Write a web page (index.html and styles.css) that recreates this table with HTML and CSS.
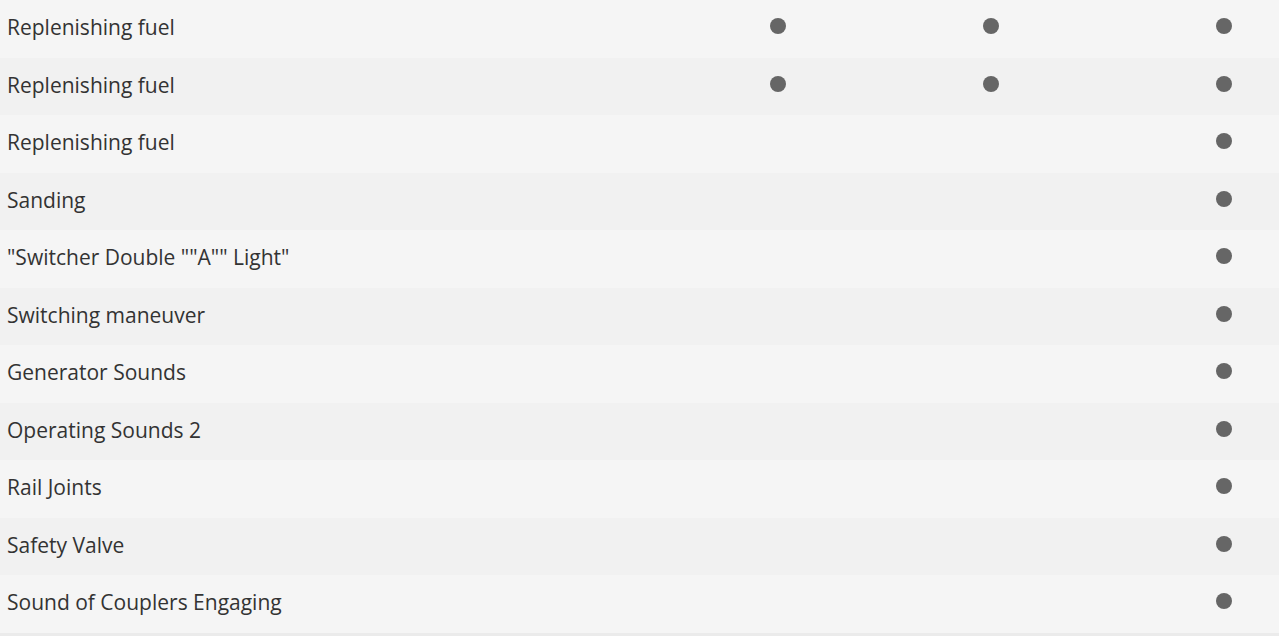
FILE: index.html
```html
<!DOCTYPE html>
<html>
<head>
<meta charset="utf-8">
<link rel="stylesheet" href="styles.css">
</head>
<body>
<div class="table">
  <div class="row"><div class="label">Replenishing fuel</div><div class="cell"><span class="dot"></span></div><div class="cell"><span class="dot"></span></div><div class="cell"><span class="dot"></span></div></div>
  <div class="row"><div class="label">Replenishing fuel</div><div class="cell"><span class="dot"></span></div><div class="cell"><span class="dot"></span></div><div class="cell"><span class="dot"></span></div></div>
  <div class="row"><div class="label">Replenishing fuel</div><div class="cell"></div><div class="cell"></div><div class="cell"><span class="dot"></span></div></div>
  <div class="row"><div class="label">Sanding</div><div class="cell"></div><div class="cell"></div><div class="cell"><span class="dot"></span></div></div>
  <div class="row"><div class="label">"Switcher Double ""A"" Light"</div><div class="cell"></div><div class="cell"></div><div class="cell"><span class="dot"></span></div></div>
  <div class="row"><div class="label">Switching maneuver</div><div class="cell"></div><div class="cell"></div><div class="cell"><span class="dot"></span></div></div>
  <div class="row"><div class="label">Generator Sounds</div><div class="cell"></div><div class="cell"></div><div class="cell"><span class="dot"></span></div></div>
  <div class="row"><div class="label">Operating Sounds 2</div><div class="cell"></div><div class="cell"></div><div class="cell"><span class="dot"></span></div></div>
  <div class="row"><div class="label">Rail Joints</div><div class="cell"></div><div class="cell"></div><div class="cell"><span class="dot"></span></div></div>
  <div class="row"><div class="label">Safety Valve</div><div class="cell"></div><div class="cell"></div><div class="cell"><span class="dot"></span></div></div>
  <div class="row"><div class="label">Sound of Couplers Engaging</div><div class="cell"></div><div class="cell"></div><div class="cell"><span class="dot"></span></div></div>
</div>
</body>
</html>
```
FILE: styles.css
```css
html, body {
  margin: 0;
  padding: 0;
  background: #ebebeb;
}
body {
  font-family: "Open Sans", "Liberation Sans", sans-serif;
  color: #333333;
  overflow: hidden;
}
.table {
  display: flex;
  flex-direction: column;
}
.row {
  display: grid;
  grid-template-columns: 770px 213px 233px 1fr;
  height: 57.5px;
  background: #f5f5f5;
}
.row:nth-child(even) {
  background: #f1f1f1;
}
.label {
  padding: 13px 0 0 7px;
  font-size: 21px;
  line-height: 28px;
  white-space: nowrap;
}
.cell {
  padding-top: 18px;
}
.dot {
  display: block;
  width: 16px;
  height: 16px;
  border-radius: 50%;
  background: #666666;
}
```
